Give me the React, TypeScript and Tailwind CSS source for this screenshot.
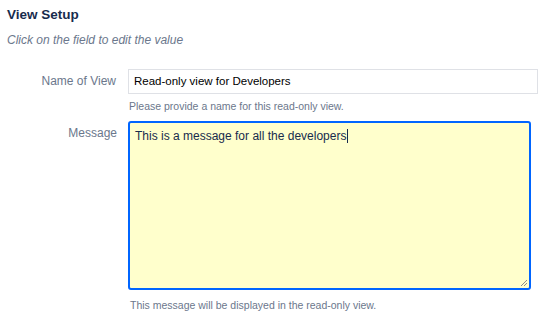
export default function App() {
  return (
    <div className="h-[328px] w-[556px] bg-white font-['Liberation_Sans',Arial,sans-serif]">
      <div className="px-[7px] pt-[7px]">
        <h2 className="text-[13.5px] font-bold leading-[16px] text-[#172b4d]">View Setup</h2>
        <p className="mt-[10px] text-[12px] italic leading-[15px] text-[#6b778c]">
          Click on the field to edit the value
        </p>
      </div>

      <div className="mt-[21px] flex flex-col gap-[8px]">
        <div className="flex items-start gap-[12px]">
          <label className="w-[116px] shrink-0 pt-[5px] text-right text-[12px] leading-[15px] text-[#6b778c]">
            Name of View
          </label>
          <div className="flex flex-col">
            <div className="flex h-[25px] w-[410px] items-center border border-[#dfe1e6] bg-white px-[5px] text-[11.5px] text-[#000]">
              Read-only view for Developers
            </div>
            <p className="mt-[6px] pl-[1px] text-[10.5px] leading-[13px] text-[#6b778c]">
              Please provide a name for this read-only view.
            </p>
          </div>
        </div>

        <div className="flex items-start gap-[11px]">
          <label className="w-[117px] shrink-0 pt-[5px] text-right text-[12px] leading-[15px] text-[#6b778c]">
            Message
          </label>
          <div className="flex flex-col">
            <div className="relative h-[169px] w-[403px] rounded-[3px] border-2 border-[#0065ff] bg-[#ffffcc] px-[5px] py-[3px] text-[12px] leading-[15px] text-[#172b4d]">
              <span>This is a message for all the developers</span>
              <span className="ml-[1px] inline-block h-[14px] w-px translate-y-[3px] bg-[#172b4d]" />
              <svg className="absolute bottom-[1px] right-[1px]" width="8" height="8" viewBox="0 0 8 8">
                <path d="M7 1 L1 7 M7 4 L4 7" stroke="#8c8c8c" strokeWidth="1" />
              </svg>
            </div>
            <p className="mt-[9px] pl-[2px] text-[10.5px] leading-[13px] text-[#6b778c]">
              This message will be displayed in the read-only view.
            </p>
          </div>
        </div>
      </div>
    </div>
  );
}
